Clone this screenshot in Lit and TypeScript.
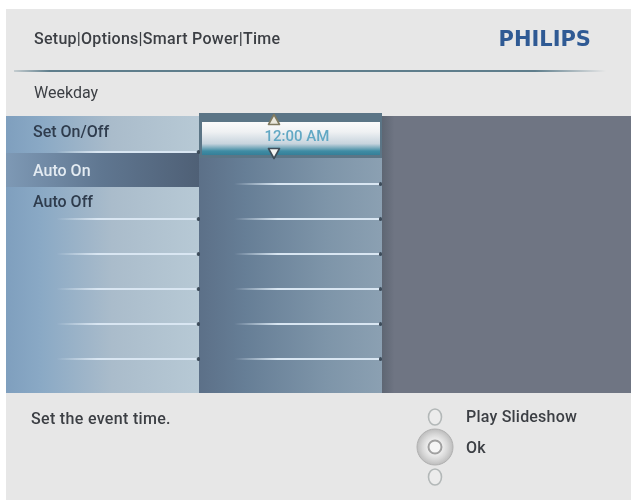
import { LitElement, html, css } from "lit";
import { customElement } from "lit/decorators.js";

@customElement("app-root")
export class AppRoot extends LitElement {
  static styles = css`
    :host { display: block; width: 637px; height: 504px; background: #fff; font-family: Roboto, "Noto Sans", sans-serif; }
    .page { padding: 9px 6px 0; }
    .panel { width: 625px; height: 491px; background: #e7e7e7; display: flex; flex-direction: column; color: #3c3f44; }
    .t { filter: blur(0.45px); }
    .head { height: 61px; flex: none; display: flex; justify-content: space-between; align-items: center; padding: 0 40px 0 28px; box-sizing: border-box; }
    .crumb { font-size: 16px; font-weight: 500; letter-spacing: 0.27px; margin-top: -2px; }
    .logo { font-family: "DejaVu Sans", sans-serif; font-weight: 700; font-size: 21px; color: #2f5a94; margin-top: -1px; }
    .rule { height: 2px; flex: none; margin: 0 25px 0 8px; background: linear-gradient(90deg, #c5cdd0 0, #5f7e8c 6%, #5f7e8c 88%, #e7e7e7 100%); filter: blur(0.4px); }
    .sub { height: 44px; flex: none; display: flex; align-items: center; padding: 0 28px 2px; font-size: 16px; box-sizing: border-box; margin-top: -1px; }
    .main { height: 277px; flex: none; display: flex; margin-top: 1px; }
    .col { display: flex; flex-direction: column; position: relative; flex: none; }
    .left { width: 193px; background: linear-gradient(90deg, #7f9fbe 0, #8aa9c5 18%, #aabccb 55%, #b7c9d5 100%); }
    .mid { width: 183px; background: linear-gradient(90deg, #5c7088 0, #667e96 25%, #7e95a9 70%, #8ba0b2 100%); }
    .right { flex: 1; background: linear-gradient(90deg, #5e6673 0, #6f7583 5%, #6f7583 100%); }
    .row { height: 35px; flex: none; position: relative; box-sizing: border-box; display: flex; align-items: center; padding-left: 27px; font-size: 16px; font-weight: 500; color: #2f3c4d; }
    .row.line::after { content: ""; position: absolute; bottom: 0; left: 50px; right: 3px; height: 2px; background: linear-gradient(90deg, rgba(215,230,245,0), #d9e6f2 30%, #d9e6f2 100%); filter: blur(0.4px); }
    .row.line::before { content: ""; position: absolute; bottom: -1px; right: -1px; width: 3px; height: 4px; border-radius: 2px; background: #3d4c5a; z-index: 2; }
    .row.first { height: 37px; padding-bottom: 7px; }
    .row.sel { height: 34px; color: #e3ebf2; background: linear-gradient(90deg, #7e99b5 0, #5f7690 50%, #4f6076 100%); }
    .row.after { height: 33px; padding-bottom: 4px; }
    .mid .row.line::after { left: 35px; right: 2px; }
    .mid .row.line::before { right: 0; }
    .mid .row.short { height: 27px; }
    .picker { height: 45px; flex: none; box-sizing: border-box; position: relative; margin-top: -3px; background: #5b7586; padding: 9px 2px 3px 3px; }
    .box { height: 33px; box-sizing: border-box; background: linear-gradient(180deg, #fbfbfb 0, #eff1f3 30%, #c6d3dd 66%, #3f8ca4 88%, #357f98 100%); display: flex; align-items: center; justify-content: center; color: #62a8c4; font-size: 15px; font-weight: 500; padding: 0 0 5px 12px; }
    .arrow { position: absolute; left: 68px; width: 14px; height: 13px; }
    .up { top: 0; }
    .down { top: 34px; }
    .foot { flex: 1; display: flex; justify-content: space-between; padding: 16px 0 0 25px; font-size: 16px; }
    .foot .help { font-weight: 500; letter-spacing: 0.32px; }
    .hints { display: flex; gap: 11px; margin-right: 54px; margin-top: -4px; }
    .labels { display: flex; flex-direction: column; gap: 12px; font-size: 16px; font-weight: 500; letter-spacing: 0.2px; padding-top: 2px; }
    .nav { width: 40px; height: 80px; display: block; margin-top: 2px; filter: blur(0.5px); }
  `;

  render() {
    return html`<div class="page"><div class="panel">
      <div class="head">
        <span class="crumb t">Setup|Options|Smart Power|Time</span>
        <span class="logo t">PHILIPS</span>
      </div>
      <div class="rule"></div>
      <div class="sub t">Weekday</div>
      <div class="main">
        <div class="col left">
          <div class="row line first"><span class="t">Set On/Off</span></div>
          <div class="row sel"><span class="t">Auto On</span></div>
          <div class="row line after"><span class="t">Auto Off</span></div>
          ${[0, 1, 2, 3].map(() => html`<div class="row line"></div>`)}
        </div>
        <div class="col mid">
          <div class="picker">
            <svg class="arrow up" viewBox="0 0 14 13"><path d="M7 1.5 L12.5 11.5 H1.5 Z" fill="#e9e7dc" stroke="#7f7a60" stroke-width="1.6" stroke-linejoin="round"/></svg>
            <div class="box"><span class="t">12:00 AM</span></div>
            <svg class="arrow down" viewBox="0 0 14 13"><path d="M1.5 1.5 H12.5 L7 11.5 Z" fill="#f4f4f2" stroke="#3e4c58" stroke-width="1.6" stroke-linejoin="round"/></svg>
          </div>
          <div class="row line short"></div>
          ${[0, 1, 2, 3, 4].map(() => html`<div class="row line"></div>`)}
        </div>
        <div class="col right"></div>
      </div>
      <div class="foot">
        <span class="help t">Set the event time.</span>
        <div class="hints">
          <svg class="nav" viewBox="0 0 40 80">
            <defs>
              <radialGradient id="g"><stop offset="0.35" stop-color="#f2f2f2"/><stop offset="0.7" stop-color="#d8d8d8"/><stop offset="1" stop-color="#bdbdbd"/></radialGradient>
            </defs>
            <ellipse cx="20" cy="10" rx="6.5" ry="8" fill="#ececec" stroke="#b3b8b8" stroke-width="1.6"/>
            <ellipse cx="20" cy="70" rx="6.5" ry="8" fill="#ececec" stroke="#b3b8b8" stroke-width="1.6"/>
            <circle cx="20" cy="40" r="18" fill="url(#g)" stroke="#b0b0b0" stroke-width="1"/>
            <circle cx="20" cy="40" r="6.5" fill="#f6f6f6" stroke="#a0a0a0" stroke-width="2"/>
          </svg>
          <div class="labels">
            <span class="t">Play Slideshow</span>
            <span class="t">Ok</span>
          </div>
        </div>
      </div>
    </div></div>`;
  }
}
